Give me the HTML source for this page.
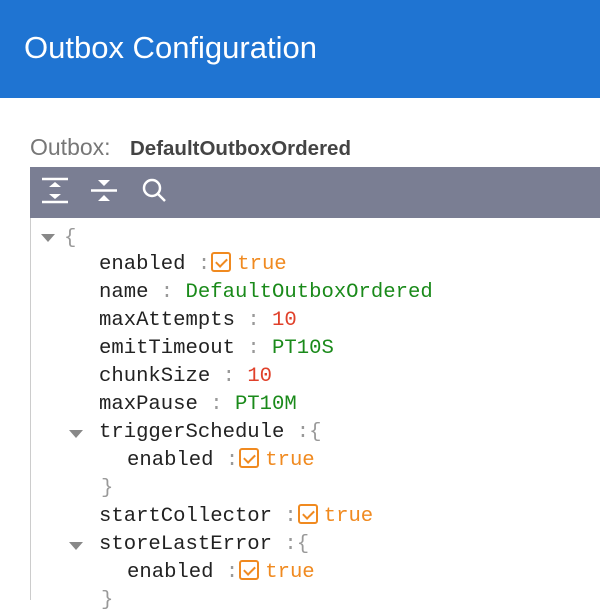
<!DOCTYPE html>
<html><head><style>
body{margin:0;width:600px;height:600px;overflow:hidden;background:#fff;font-family:"Liberation Sans",sans-serif;position:relative}
.hdr{position:absolute;left:0;top:0;width:600px;height:98px;background:#1f74d2}
.hdr span{position:absolute;left:24px;top:30px;color:#fff;font-size:31px}
.lbl{position:absolute;left:30px;top:134px;font-size:23px;color:#777}
.lbl b{position:absolute;left:100px;top:3px;font-weight:bold;font-size:20.5px;color:#444;white-space:nowrap}
.tb{position:absolute;left:30px;top:167px;width:570px;height:51px;background:#7a7e93}
.panel{position:absolute;left:30px;top:218px;width:570px;height:382px;border-left:1px solid #ccc}
.r{position:absolute;font-family:"Liberation Mono",monospace;font-size:20.6px;color:#222;white-space:pre;line-height:28px}
.c{color:#999}
.t{color:#f08a20}
.s{color:#1a8a1a}
.n{color:#e0402a}
.cb{display:inline-block;width:20px;height:20px;border:2px solid #f08a20;border-radius:3px;box-sizing:border-box;vertical-align:-3px;margin:0 6px 0 1px;position:relative}
.cb:after{content:"";position:absolute;left:5px;top:2px;width:5px;height:9px;border:solid #f08a20;border-width:0 2px 2px 0;transform:rotate(45deg)}
.tri{position:absolute;width:0;height:0;border-left:7px solid transparent;border-right:7px solid transparent;border-top:8px solid #888}
</style></head><body>
<div class="hdr"><span>Outbox Configuration</span></div>
<div class="lbl">Outbox:<b>DefaultOutboxOrdered</b></div>
<div class="tb">
<svg width="570" height="51">
<g stroke="#fff" stroke-width="2.5" fill="#fff">
<line x1="12" y1="12" x2="38" y2="12"/><line x1="12" y1="35" x2="38" y2="35"/>
<path d="M19 20 L25 15 L31 20Z M19 27 L25 32 L31 27Z" stroke="none"/>
<line x1="61" y1="23.5" x2="87" y2="23.5"/>
<path d="M68 13 L80 13 L74 19Z M68 34 L80 34 L74 28Z" stroke="none"/>
<circle cx="122" cy="21" r="8" fill="none"/><line x1="128" y1="27" x2="135" y2="34"/>
</g></svg>
</div>
<div class="panel"></div>
<div class="tri" style="left:41px;top:234px"></div>
<div class="r c" style="left:64px;top:225px">{</div>
<div class="r" style="left:99px;top:251px">enabled <span class="c">:</span><span class="cb"></span><span class="t">true</span></div>
<div class="r" style="left:99px;top:279px">name <span class="c">:</span> <span class="s">DefaultOutboxOrdered</span></div>
<div class="r" style="left:99px;top:307px">maxAttempts <span class="c">:</span> <span class="n">10</span></div>
<div class="r" style="left:99px;top:335px">emitTimeout <span class="c">:</span> <span class="s">PT10S</span></div>
<div class="r" style="left:99px;top:363px">chunkSize <span class="c">:</span> <span class="n">10</span></div>
<div class="r" style="left:99px;top:391px">maxPause <span class="c">:</span> <span class="s">PT10M</span></div>
<div class="tri" style="left:69px;top:430px"></div>
<div class="r" style="left:99px;top:419px">triggerSchedule <span class="c">:{</span></div>
<div class="r" style="left:127px;top:447px">enabled <span class="c">:</span><span class="cb"></span><span class="t">true</span></div>
<div class="r c" style="left:101px;top:475px">}</div>
<div class="r" style="left:99px;top:503px">startCollector <span class="c">:</span><span class="cb"></span><span class="t">true</span></div>
<div class="tri" style="left:69px;top:542px"></div>
<div class="r" style="left:99px;top:531px">storeLastError <span class="c">:{</span></div>
<div class="r" style="left:127px;top:559px">enabled <span class="c">:</span><span class="cb"></span><span class="t">true</span></div>
<div class="r c" style="left:101px;top:587px">}</div>
</body></html>
